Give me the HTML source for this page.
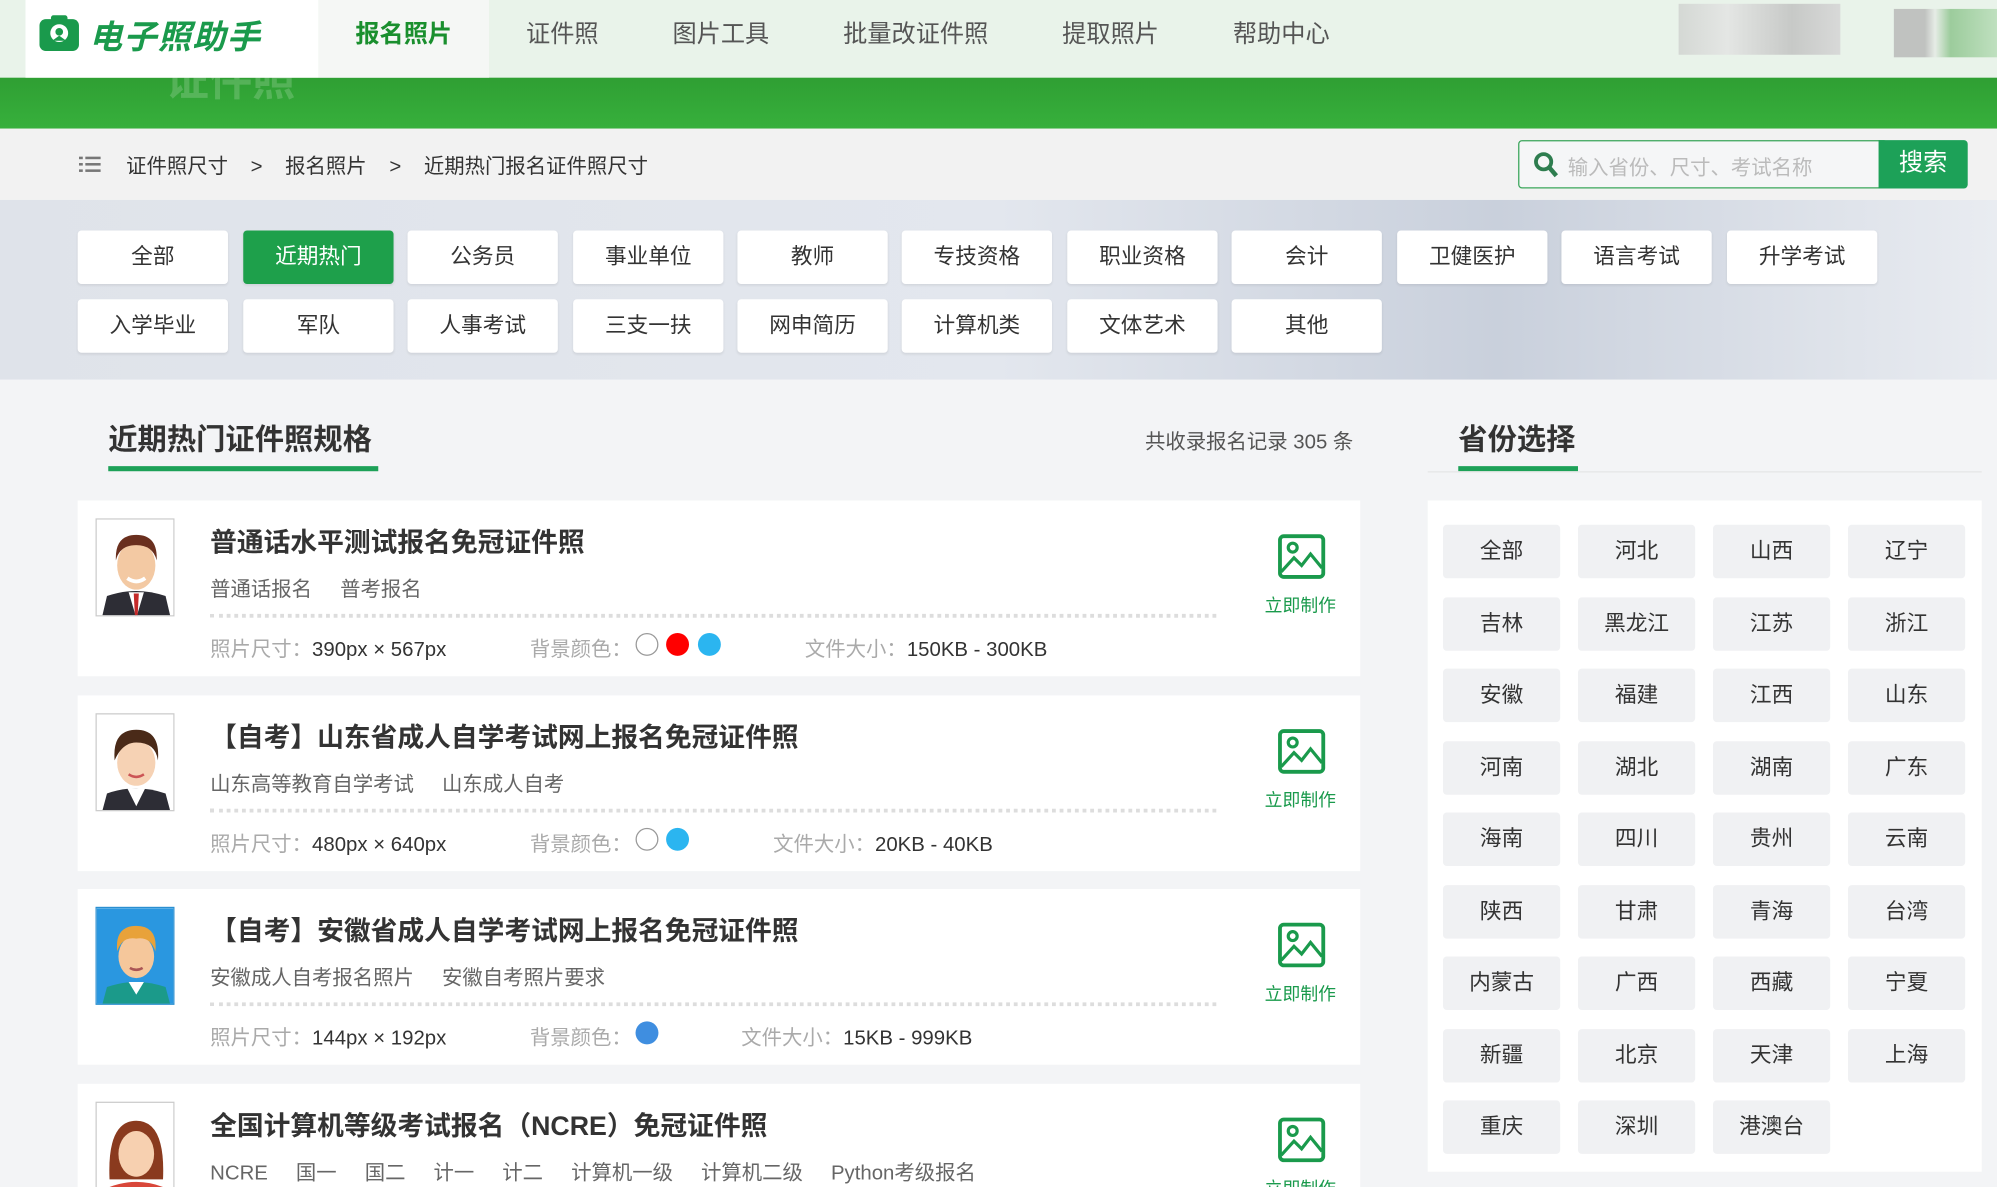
<!DOCTYPE html>
<html><head><meta charset="utf-8"><style>
*{margin:0;padding:0;box-sizing:border-box}
html,body{width:1997px;height:1187px;overflow:hidden;background:#f3f4f6}
#w{position:absolute;left:0;top:0;width:1568px;height:932px;transform:scale(1.27360);transform-origin:0 0;font-family:"Liberation Sans","Noto Sans CJK SC",sans-serif;color:#333;overflow:hidden}
.a{position:absolute}
.nav{font-size:19px;color:#555;top:12px;white-space:nowrap}
.cb{position:absolute;width:118px;height:42px;background:#fff;border-radius:3px;font-size:17px;text-align:center;line-height:42px;color:#333;box-shadow:0 1px 2px rgba(0,0,0,.08)}
.cb.on{background:#1ea04b;color:#fff}
.card{position:absolute;left:61px;width:1007px;height:138px;background:#fff;overflow:hidden}
.av{position:absolute;left:14px;top:14px;width:62px;height:77px;border:1px solid #ccc;overflow:hidden}
.tt{position:absolute;left:104px;top:17px;font-size:21px;font-weight:bold;color:#333;white-space:nowrap}
.tg{position:absolute;left:104px;top:56px;font-size:16px;color:#666;white-space:nowrap;word-spacing:0}
.tg span{margin-right:22px}
.dl{position:absolute;left:104px;top:89px;width:790px;border-top:3px dotted #ddd}
.inf{position:absolute;top:103px;font-size:16px;white-space:nowrap}
.g{color:#aaa}
.ci{position:absolute;top:104px;width:18px;height:18px;border-radius:50%}
.mk{position:absolute;left:942px;top:26px;width:38px;height:36px}
.mt{position:absolute;left:932px;top:72px;font-size:14px;color:#1a9a4c}
.pb{position:absolute;width:92px;height:42px;background:#f0f1f3;border-radius:3px;font-size:17px;line-height:42px;text-align:center;color:#333}
</style></head><body><div id="w">
<div class="a" style="left:0;top:0;width:1568px;height:61px;background:#e9f3ea"></div>
<div class="a" style="left:0;top:61px;width:1568px;height:40px;background:linear-gradient(#2f9f33,#37b03c)"></div>
<div class="a" style="left:130px;top:36px;font-size:34px;font-weight:bold;color:rgba(255,255,255,.18)">证件照</div>
<div class="a" style="left:20px;top:0;width:230px;height:61px;background:#fff"></div>
<svg class="a" style="left:30px;top:11px" width="34" height="30" viewBox="0 0 34 30"><rect x="1" y="4" width="31" height="25" rx="5" fill="#1a9a4c"/><rect x="10" y="1" width="13" height="6" rx="2" fill="#1a9a4c"/><circle cx="16.5" cy="15" r="7" fill="#fff"/><circle cx="16.5" cy="14" r="3" fill="#1a9a4c"/><path d="M11 21 L16.5 17 L22 21 Z" fill="#1a9a4c"/></svg>
<div class="a" style="left:70px;top:9px;font-size:26px;font-weight:bold;font-style:italic;color:#1a9a4c;letter-spacing:1px">电子照助手</div>
<div class="a" style="left:250px;top:0;width:134px;height:61px;background:#f5f7f5"></div>
<div class="a nav" style="left:279px;color:#1a8f2e;font-weight:bold">报名照片</div>
<div class="a nav" style="left:413px">证件照</div>
<div class="a nav" style="left:528px">图片工具</div>
<div class="a nav" style="left:662px">批量改证件照</div>
<div class="a nav" style="left:834px">提取照片</div>
<div class="a nav" style="left:968px">帮助中心</div>
<div class="a" style="left:1318px;top:3px;width:127px;height:40px;background:linear-gradient(90deg,#d4d8d4,#e4e6e4 30%,#c7c9c7 70%,#d8d9d8)"></div>
<div class="a" style="left:1487px;top:7px;width:81px;height:38px;background:linear-gradient(90deg,#c0c2c0 30%,#e6ece6 40%,#9ccc9c 55%,#bfe0bf)"></div>
<div class="a" style="left:0;top:101px;width:1568px;height:56px;background:#f2f2f2"></div>
<svg class="a" style="left:62px;top:122px" width="18" height="15"><g fill="#777"><rect x="0" y="1" width="3" height="2"/><rect x="5" y="1" width="12" height="2"/><rect x="0" y="6" width="3" height="2"/><rect x="5" y="6" width="12" height="2"/><rect x="0" y="11" width="3" height="2"/><rect x="5" y="11" width="12" height="2"/></g></svg>
<div class="a" style="left:99px;top:117px;font-size:16px;color:#333;white-space:nowrap">证件照尺寸 &nbsp;&nbsp;&nbsp;&gt;&nbsp;&nbsp;&nbsp; 报名照片 &nbsp;&nbsp;&nbsp;&gt;&nbsp;&nbsp;&nbsp; 近期热门报名证件照尺寸</div>
<div class="a" style="left:1192px;top:110px;width:290px;height:38px;border:1px solid #3aa55a;border-radius:3px;background:#f5f6f7"></div>
<svg class="a" style="left:1204px;top:119px" width="20" height="21"><circle cx="8" cy="8" r="6" fill="none" stroke="#2e7d4f" stroke-width="3"/><path d="M12 12 L18 19" stroke="#2e7d4f" stroke-width="3.5"/></svg>
<div class="a" style="left:1231px;top:118px;font-size:16px;color:#bbb">输入省份、尺寸、考试名称</div>
<div class="a" style="left:1475px;top:110px;width:70px;height:38px;background:#1da158;border-radius:0 3px 3px 0;color:#fff;font-size:19px;text-align:center;line-height:38px">搜索</div>
<div class="a" style="left:0;top:157px;width:1568px;height:141px;background:linear-gradient(90deg,#dfe3ea,#e3e7ee 50%,#c9d0dc 75%,#e9ecf1)"></div>
<div class="cb" style="left:61px;top:181px">全部</div>
<div class="cb on" style="left:191px;top:181px">近期热门</div>
<div class="cb" style="left:320px;top:181px">公务员</div>
<div class="cb" style="left:450px;top:181px">事业单位</div>
<div class="cb" style="left:579px;top:181px">教师</div>
<div class="cb" style="left:708px;top:181px">专技资格</div>
<div class="cb" style="left:838px;top:181px">职业资格</div>
<div class="cb" style="left:967px;top:181px">会计</div>
<div class="cb" style="left:1097px;top:181px">卫健医护</div>
<div class="cb" style="left:1226px;top:181px">语言考试</div>
<div class="cb" style="left:1356px;top:181px">升学考试</div>
<div class="cb" style="left:61px;top:235px">入学毕业</div>
<div class="cb" style="left:191px;top:235px">军队</div>
<div class="cb" style="left:320px;top:235px">人事考试</div>
<div class="cb" style="left:450px;top:235px">三支一扶</div>
<div class="cb" style="left:579px;top:235px">网申简历</div>
<div class="cb" style="left:708px;top:235px">计算机类</div>
<div class="cb" style="left:838px;top:235px">文体艺术</div>
<div class="cb" style="left:967px;top:235px">其他</div>
<div class="a" style="left:85px;top:326px;font-size:23px;font-weight:bold">近期热门证件照规格</div>
<div class="a" style="left:85px;top:366px;width:212px;height:4px;background:#1da158"></div>
<div class="a" style="left:899px;top:333px;font-size:16px;color:#555">共收录报名记录 305 条</div>
<div class="a" style="left:1145px;top:326px;font-size:23px;font-weight:bold">省份选择</div>
<div class="a" style="left:1145px;top:366px;width:94px;height:4px;background:#1da158"></div>
<div class="a" style="left:1121px;top:370px;width:435px;height:1px;background:#e6e6e6"></div>

<div class="card" style="top:393px">
<div class="av"><svg width="62" height="77"><rect width="62" height="77" fill="#fff"/><path d="M4 77 L8 60 Q31 52 54 60 L58 77Z" fill="#2d2d35"/><path d="M25 57 L31 77 L37 57Z" fill="#fff"/><path d="M29 58 L33 58 L32 77 L30 77Z" fill="#c42a2a"/><ellipse cx="31" cy="36" rx="15" ry="19" fill="#f3c9a3"/><path d="M15 32 Q14 12 31 12 Q48 12 47 32 Q44 20 31 20 Q18 20 15 32Z" fill="#6a2f1e"/><path d="M24 46 Q31 51 38 46" stroke="#fff" stroke-width="3" fill="none"/></svg></div>
<div class="tt">普通话水平测试报名免冠证件照</div>
<div class="tg"><span>普通话报名</span><span>普考报名</span></div>
<div class="dl"></div>
<div class="inf" style="left:104px"><span class="g">照片尺寸：</span>390px × 567px</div>
<div class="inf g" style="left:355px">背景颜色：</div>
<div class="ci" style="left:438px;border:1px solid #999;background:#fff"></div>
<div class="ci" style="left:462px;background:#f00"></div>
<div class="ci" style="left:487px;background:#2bb5f0"></div>
<div class="inf" style="left:571px"><span class="g">文件大小：</span>150KB - 300KB</div>
<svg class="mk" viewBox="0 0 38 36"><rect x="2" y="2" width="34" height="32" rx="3" fill="none" stroke="#1a9a4c" stroke-width="3"/><circle cx="12" cy="11" r="3.5" fill="none" stroke="#1a9a4c" stroke-width="2.5"/><path d="M3 30 L13 19 L19 25 L26 16 L35 27" fill="none" stroke="#1a9a4c" stroke-width="2.5"/></svg>
<div class="mt">立即制作</div>
</div>
<div class="card" style="top:546px">
<div class="av"><svg width="62" height="77"><rect width="62" height="77" fill="#fff"/><path d="M4 77 L8 62 Q31 54 54 62 L58 77Z" fill="#2d2d35"/><path d="M24 58 L31 72 L38 58Z" fill="#fff"/><ellipse cx="31" cy="38" rx="15" ry="18" fill="#f6d2b4"/><path d="M14 36 Q12 12 31 12 Q50 12 48 36 Q46 22 31 22 Q20 22 14 36Z" fill="#4a2a18"/><path d="M25 47 Q31 51 37 47" stroke="#c55" stroke-width="2" fill="none"/></svg></div>
<div class="tt">【自考】山东省成人自学考试网上报名免冠证件照</div>
<div class="tg"><span>山东高等教育自学考试</span><span>山东成人自考</span></div>
<div class="dl"></div>
<div class="inf" style="left:104px"><span class="g">照片尺寸：</span>480px × 640px</div>
<div class="inf g" style="left:355px">背景颜色：</div>
<div class="ci" style="left:438px;border:1px solid #999;background:#fff"></div>
<div class="ci" style="left:462px;background:#2bb5f0"></div>
<div class="inf" style="left:546px"><span class="g">文件大小：</span>20KB - 40KB</div>
<svg class="mk" viewBox="0 0 38 36"><rect x="2" y="2" width="34" height="32" rx="3" fill="none" stroke="#1a9a4c" stroke-width="3"/><circle cx="12" cy="11" r="3.5" fill="none" stroke="#1a9a4c" stroke-width="2.5"/><path d="M3 30 L13 19 L19 25 L26 16 L35 27" fill="none" stroke="#1a9a4c" stroke-width="2.5"/></svg>
<div class="mt">立即制作</div>
</div>
<div class="card" style="top:698px">
<div class="av" style="border-color:#2a8fd0"><svg width="62" height="77"><rect width="62" height="77" fill="#2a97e0"/><path d="M4 77 L8 62 Q31 54 54 62 L58 77Z" fill="#1b9a8a"/><path d="M25 58 L31 68 L37 58Z" fill="#fff"/><ellipse cx="31" cy="38" rx="14" ry="17" fill="#f5c79b"/><path d="M16 34 Q14 14 31 14 Q48 14 46 34 Q42 22 31 24 Q20 22 16 34Z" fill="#e8a23a"/><path d="M26 47 Q31 50 36 47" stroke="#a55" stroke-width="2" fill="none"/></svg></div>
<div class="tt">【自考】安徽省成人自学考试网上报名免冠证件照</div>
<div class="tg"><span>安徽成人自考报名照片</span><span>安徽自考照片要求</span></div>
<div class="dl"></div>
<div class="inf" style="left:104px"><span class="g">照片尺寸：</span>144px × 192px</div>
<div class="inf g" style="left:355px">背景颜色：</div>
<div class="ci" style="left:438px;background:#3f8ee0"></div>
<div class="inf" style="left:521px"><span class="g">文件大小：</span>15KB - 999KB</div>
<svg class="mk" viewBox="0 0 38 36"><rect x="2" y="2" width="34" height="32" rx="3" fill="none" stroke="#1a9a4c" stroke-width="3"/><circle cx="12" cy="11" r="3.5" fill="none" stroke="#1a9a4c" stroke-width="2.5"/><path d="M3 30 L13 19 L19 25 L26 16 L35 27" fill="none" stroke="#1a9a4c" stroke-width="2.5"/></svg>
<div class="mt">立即制作</div>
</div>
<div class="card" style="top:851px;height:81px">
<div class="av"><svg width="62" height="77"><rect width="62" height="77" fill="#fff"/><path d="M10 60 Q8 14 31 14 Q54 14 52 60Z" fill="#8a3a1e"/><ellipse cx="31" cy="40" rx="14" ry="18" fill="#f7d0b0"/><path d="M4 77 L10 66 Q31 58 52 66 L58 77Z" fill="#d9473a"/></svg></div>
<div class="tt">全国计算机等级考试报名（NCRE）免冠证件照</div>
<div class="tg"><span>NCRE</span><span>国一</span><span>国二</span><span>计一</span><span>计二</span><span>计算机一级</span><span>计算机二级</span><span>Python考级报名</span></div>
<svg class="mk" viewBox="0 0 38 36"><rect x="2" y="2" width="34" height="32" rx="3" fill="none" stroke="#1a9a4c" stroke-width="3"/><circle cx="12" cy="11" r="3.5" fill="none" stroke="#1a9a4c" stroke-width="2.5"/><path d="M3 30 L13 19 L19 25 L26 16 L35 27" fill="none" stroke="#1a9a4c" stroke-width="2.5"/></svg>
<div class="mt">立即制作</div>
</div>
<div class="a" style="left:1121px;top:393px;width:435px;height:527px;background:#fff"></div>
<div class="pb" style="left:1133px;top:412px">全部</div><div class="pb" style="left:1239px;top:412px">河北</div><div class="pb" style="left:1345px;top:412px">山西</div><div class="pb" style="left:1451px;top:412px">辽宁</div>
<div class="pb" style="left:1133px;top:469px">吉林</div><div class="pb" style="left:1239px;top:469px">黑龙江</div><div class="pb" style="left:1345px;top:469px">江苏</div><div class="pb" style="left:1451px;top:469px">浙江</div>
<div class="pb" style="left:1133px;top:525px">安徽</div><div class="pb" style="left:1239px;top:525px">福建</div><div class="pb" style="left:1345px;top:525px">江西</div><div class="pb" style="left:1451px;top:525px">山东</div>
<div class="pb" style="left:1133px;top:582px">河南</div><div class="pb" style="left:1239px;top:582px">湖北</div><div class="pb" style="left:1345px;top:582px">湖南</div><div class="pb" style="left:1451px;top:582px">广东</div>
<div class="pb" style="left:1133px;top:638px">海南</div><div class="pb" style="left:1239px;top:638px">四川</div><div class="pb" style="left:1345px;top:638px">贵州</div><div class="pb" style="left:1451px;top:638px">云南</div>
<div class="pb" style="left:1133px;top:695px">陕西</div><div class="pb" style="left:1239px;top:695px">甘肃</div><div class="pb" style="left:1345px;top:695px">青海</div><div class="pb" style="left:1451px;top:695px">台湾</div>
<div class="pb" style="left:1133px;top:751px">内蒙古</div><div class="pb" style="left:1239px;top:751px">广西</div><div class="pb" style="left:1345px;top:751px">西藏</div><div class="pb" style="left:1451px;top:751px">宁夏</div>
<div class="pb" style="left:1133px;top:808px">新疆</div><div class="pb" style="left:1239px;top:808px">北京</div><div class="pb" style="left:1345px;top:808px">天津</div><div class="pb" style="left:1451px;top:808px">上海</div>
<div class="pb" style="left:1133px;top:864px">重庆</div><div class="pb" style="left:1239px;top:864px">深圳</div><div class="pb" style="left:1345px;top:864px">港澳台</div>
</div></body></html>
